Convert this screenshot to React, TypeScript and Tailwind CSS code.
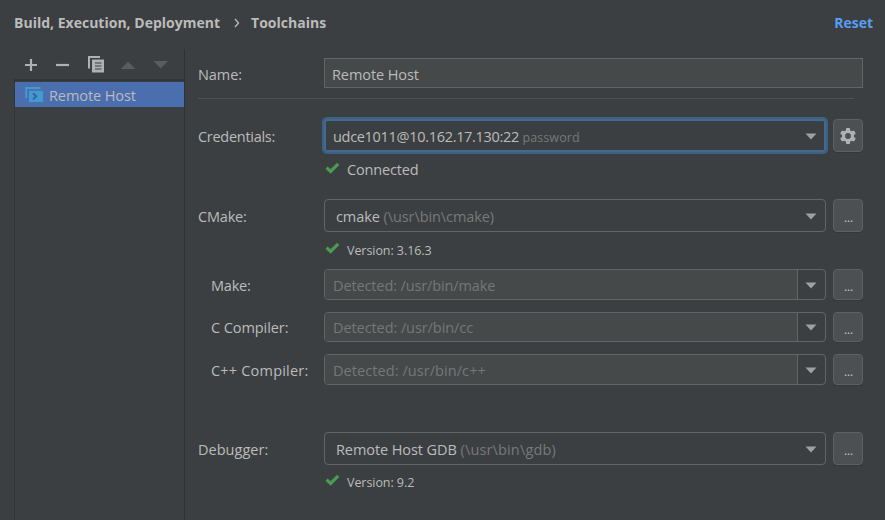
import React from "react";

const Check = () => (
  <svg width="15" height="12" viewBox="0 0 15 12" className="shrink-0">
    <path d="M1.6 5.6 L5.6 9.4 L13.2 1.8" fill="none" stroke="#499C54" strokeWidth="3.2" />
  </svg>
);

const Arrow = () => (
  <svg width="12" height="7" viewBox="0 0 12 7" className="mt-px shrink-0">
    <path d="M0.5 0.5 H11.5 L6 6.5 Z" fill="#9DA1A4" />
  </svg>
);

function Status({ text, small = false }: { text: string; small?: boolean }) {
  return (
    <div className="ml-[127px] flex h-5 items-center gap-[7px]">
      <div className="-mt-1 flex">
        <Check />
      </div>
      <span className={small ? "pt-[2px] text-[12.5px] tracking-[-0.06px]" : "text-[14.5px] tracking-[-0.15px]"}>{text}</span>
    </div>
  );
}

function SideButton({ children }: { children: React.ReactNode }) {
  return (
    <button className="ml-[7px] flex h-full w-[30px] shrink-0 items-center justify-center rounded-[4px] border border-[#5E6163] bg-[#4C5053] shadow-[0_1px_0_#353738]">
      {children}
    </button>
  );
}

const Dots = () => <span className="mt-[5px] pl-px text-[12px] leading-none text-[#C4C6C8]">...</span>;

function Label({ text, indent = false, className = "" }: { text: string; indent?: boolean; className?: string }) {
  return <div className={`w-[126px] shrink-0 pt-[2px] ${indent ? "pl-[13px]" : ""} ${className}`}>{text}</div>;
}

function Combo({ children }: { children: React.ReactNode }) {
  return (
    <div className="flex h-full w-[502px] items-center justify-between rounded-[4px] border border-[#646464] pl-[11px] pr-[8px]">
      <span className="pt-[2px]">{children}</span>
      <Arrow />
    </div>
  );
}

function Editable({ text, className = "" }: { text: string; className?: string }) {
  return (
    <div className="flex h-full w-[502px] overflow-hidden rounded-[4px] border border-[#646464]">
      <div className={`flex flex-1 items-center bg-[#45494A] pl-2 pt-[2px] text-[#777777] ${className}`}>{text}</div>
      <div className="flex w-[28px] items-center justify-center border-l border-[#646464] pr-px">
        <Arrow />
      </div>
    </div>
  );
}

function Sidebar() {
  return (
    <aside className="flex w-[171px] flex-col border-r border-[#2F3133]">
      <div className="ml-[10px] flex h-[30px] items-center pt-[2px]">
        <svg width="150" height="20" viewBox="0 0 150 20">
          <path d="M7 4 V16 M1 10 H13" stroke="#AFB1B3" strokeWidth="2.2" />
          <path d="M32 10 H45" stroke="#AFB1B3" strokeWidth="2.2" />
          <path d="M65 13.5 V2 H76" fill="none" stroke="#AFB1B3" strokeWidth="2" />
          <path d="M68 4.5 H80 V17.5 H68 Z" fill="#AFB1B3" />
          <path d="M71 8 H77.5 M71 11 H77.5 M71 14 H77.5" stroke="#3C3F41" strokeWidth="1.2" />
          <path d="M97 14 L104 6.5 L111.5 14 Z" fill="#5A5C5D" />
          <path d="M129.5 6 H144 L136.7 13.5 Z" fill="#5A5C5D" />
        </svg>
      </div>
      <div className="flex-1 border-l border-t-2 border-[#323435] pt-px">
        <div className="flex h-[25px] items-center bg-[#4B6EAF] pl-[10px]">
          <svg width="19" height="17" viewBox="0 0 19 17">
            <path d="M1.2 12 V2 H15.5" fill="none" stroke="#3F9BD0" strokeWidth="2" />
            <path d="M4 4.8 H18 V16 H4 Z" fill="#3F9BD0" />
            <path d="M8 7.2 L11.3 10.3 L8 13.4" fill="none" stroke="#3A639F" strokeWidth="2" />
          </svg>
          <span className="ml-[5px] pt-[2px]">Remote Host</span>
        </div>
      </div>
    </aside>
  );
}

export default function App() {
  return (
    <div className="flex h-[520px] w-[885px] flex-col overflow-hidden bg-[#3C3F41] font-['Open_Sans','Noto_Sans',sans-serif] text-[14.5px] leading-5 tracking-[-0.08px] text-[#BBBBBB] whitespace-nowrap">
      <header className="flex h-[49px] shrink-0 items-center pb-[3px] pl-[14px] pr-[12px] text-[14px] font-bold tracking-[0.01px]">
        <span>Build, Execution, Deployment</span>
        <svg width="6" height="10" viewBox="0 0 6 10" className="ml-[14px] mr-[11px]">
          <path d="M1 1 L4.5 5 L1 9" fill="none" stroke="#BBBBBB" strokeWidth="1.3" />
        </svg>
        <span>Toolchains</span>
        <span className="ml-auto text-[#589DF6]">Reset</span>
      </header>
      <div className="flex flex-1 pl-[14px]">
        <Sidebar />
        <main className="flex flex-1 flex-col pl-[13px] pt-[9px]">
          <div className="flex h-[30px] items-center">
            <Label text="Name:" className="pt-[3px]" />
            <div className="flex h-full w-[539px] items-center border border-[#646464] bg-[#45494A] pl-[7px] pt-[3px]">Remote Host</div>
          </div>
          <div className="mt-[10px] h-px w-[656px] bg-[#515151]" />
          <div className="mt-[20px] flex h-[33px] items-center">
            <Label text="Credentials:" className="tracking-[-0.28px]" />
            <div className="flex h-full w-[502px] items-center justify-between rounded-[3px] border-2 border-[#43698F] pl-[7px] pr-[7px] ring-2 ring-[#3D6185]">
              <span className="pt-[3px] tracking-[-0.31px]">
                udce1011@10.162.17.130:22 <span className="text-[12.5px] tracking-[0.1px] text-[#787878]">password</span>
              </span>
              <Arrow />
            </div>
            <SideButton>
              <svg width="18" height="18" viewBox="0 0 18 18">
                <path
                  fill="#AFB1B3"
                  fillRule="evenodd"
                  d="M7.2 1 H10.8 L11.2 3.4 L12.7 4.3 L15 3.4 L16.8 6.5 L14.9 8 V10 L16.8 11.5 L15 14.6 L12.7 13.7 L11.2 14.6 L10.8 17 H7.2 L6.8 14.6 L5.3 13.7 L3 14.6 L1.2 11.5 L3.1 10 V8 L1.2 6.5 L3 3.4 L5.3 4.3 L6.8 3.4 Z M9 6.1 A2.9 2.9 0 1 0 9 11.9 A2.9 2.9 0 1 0 9 6.1 Z"
                />
              </svg>
            </SideButton>
          </div>
          <div className="mt-[8px]">
            <Status text="Connected" />
          </div>
          <div className="mt-[19px] flex h-[33px] items-center">
            <Label text="CMake:" className="tracking-[-0.2px]" />
            <Combo>
              cmake <span className="text-[#787878]">(\usr\bin\cmake)</span>
            </Combo>
            <SideButton><Dots /></SideButton>
          </div>
          <div className="mt-[8px]">
            <Status text="Version: 3.16.3" small />
          </div>
          <div className="mt-[9px] flex h-[31px] items-center">
            <Label text="Make:" indent className="tracking-[-0.2px]" />
            <Editable text="Detected: /usr/bin/make" className="tracking-[-0.12px]" />
            <SideButton><Dots /></SideButton>
          </div>
          <div className="mt-[12px] flex h-[30px] items-center">
            <Label text="C Compiler:" indent />
            <Editable text="Detected: /usr/bin/cc" />
            <SideButton><Dots /></SideButton>
          </div>
          <div className="mt-[12px] flex h-[31px] items-center">
            <Label text="C++ Compiler:" indent className="tracking-[0.2px]" />
            <Editable text="Detected: /usr/bin/c++" className="tracking-[0.07px]" />
            <SideButton><Dots /></SideButton>
          </div>
          <div className="mt-[47px] flex h-[33px] items-center">
            <Label text="Debugger:" className="tracking-[0.02px]" />
            <Combo>
              Remote Host GDB <span className="tracking-[0.15px] text-[#787878]">(\usr\bin\gdb)</span>
            </Combo>
            <SideButton><Dots /></SideButton>
          </div>
          <div className="mt-[7px]">
            <Status text="Version: 9.2" small />
          </div>
        </main>
      </div>
    </div>
  );
}
